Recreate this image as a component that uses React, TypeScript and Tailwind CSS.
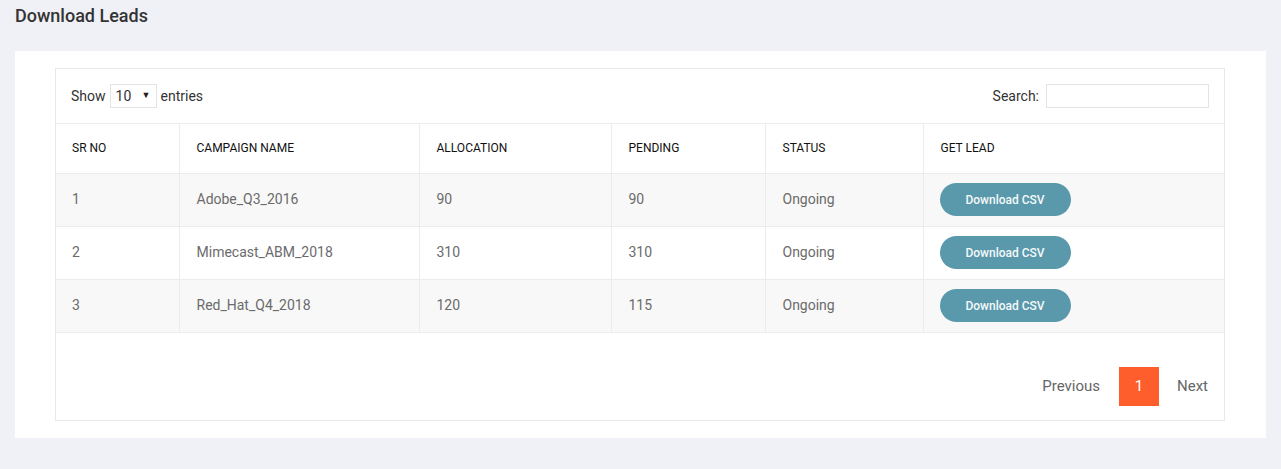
import React from 'react';

type Lead = {
  id: number;
  campaign: string;
  allocation: number;
  pending: number;
  status: string;
};

const leads: Lead[] = [
  { id: 1, campaign: 'Adobe_Q3_2016', allocation: 90, pending: 90, status: 'Ongoing' },
  { id: 2, campaign: 'Mimecast_ABM_2018', allocation: 310, pending: 310, status: 'Ongoing' },
  { id: 3, campaign: 'Red_Hat_Q4_2018', allocation: 120, pending: 115, status: 'Ongoing' },
];

const headers = ['SR NO', 'CAMPAIGN NAME', 'ALLOCATION', 'PENDING', 'STATUS', 'GET LEAD'];

export default function App() {
  return <div className="min-h-[469px] bg-[#f0f1f6] pt-[4px] pb-[31px]" style={{ fontFamily: 'Roboto, "Liberation Sans", sans-serif' }}>
      <h1 className="mx-[15px] text-[18px] leading-[24px] font-medium text-[#333]">Download Leads</h1>

      <div className="mt-[23px] mx-[15px] bg-white pt-[17px] pb-[17px] pl-[40px] pr-[41px]">
        <div className="border border-[#e8e8e8]">
          {/* length + search controls */}
          <div className="flex items-center justify-between pl-[15px] pr-[15px] py-[15px]">
            <div className="flex items-center text-[14px] text-[#333]">
              <span>Show</span>
              <div className="ml-[4px] mr-[4px] flex h-[24px] w-[47px] items-center justify-between border border-[#e4e4e4] pl-[5px] pr-[5px]">
                <span>10</span>
                <span className="text-[9px] text-[#222]">▼</span>
              </div>
              <span>entries</span>
            </div>
            <div className="flex items-center text-[14px] text-[#333]">
              <span>Search:</span>
              <input className="ml-[7px] h-[24px] w-[163px] border border-[#e4e4e4] outline-none" />
            </div>
          </div>

          <table className="w-full table-fixed border-collapse">
            <colgroup>
              <col className="w-[123px]" />
              <col className="w-[240px]" />
              <col className="w-[192px]" />
              <col className="w-[154px]" />
              <col className="w-[158px]" />
              <col />
            </colgroup>
            <thead>
              <tr className="h-[50px] border-t border-b border-[#ececec]">
                {headers.map((h, i) => <th key={h} className={`pr-[16px] pb-[1px] text-left text-[12px] font-normal text-[#111] ${i > 0 ? 'pl-[17px] border-l border-[#ececec]' : 'pl-[16px]'}`}>
                    {h}
                  </th>)}
              </tr>
            </thead>
            <tbody>
              {leads.map((lead, idx) => <tr key={lead.id} className={`h-[53px] border-b border-[#ececec] text-[14px] text-[#6b6b6b] ${idx % 2 === 0 ? 'bg-[#f8f8f8]' : 'bg-white'}`}>
                  <td className="px-[16px] pb-[1px]">{lead.id}</td>
                  <td className="px-[17px] pb-[1px] border-l border-[#ececec]">{lead.campaign}</td>
                  <td className="px-[17px] pb-[1px] border-l border-[#ececec]">{lead.allocation}</td>
                  <td className="px-[17px] pb-[1px] border-l border-[#ececec]">{lead.pending}</td>
                  <td className="px-[17px] pb-[1px] border-l border-[#ececec]">{lead.status}</td>
                  <td className="px-[16px] pb-[1px] border-l border-[#ececec]">
                    <button className="h-[33px] w-[131px] rounded-full bg-[#5a99ab] text-[12px] font-medium text-[#f4f8fa]">
                      Download CSV
                    </button>
                  </td>
                </tr>)}
            </tbody>
          </table>

          {/* pagination */}
          <div className="flex items-center justify-end pt-[34px] pb-[14px] pr-[16px] text-[15px] text-[#666]">
            <span className="mr-[19px]">Previous</span>
            <span className="flex h-[39px] w-[40px] items-center justify-center bg-[#fe5e2b] text-white">1</span>
            <span className="ml-[18px]">Next</span>
          </div>
        </div>
      </div>
    </div>;
}
